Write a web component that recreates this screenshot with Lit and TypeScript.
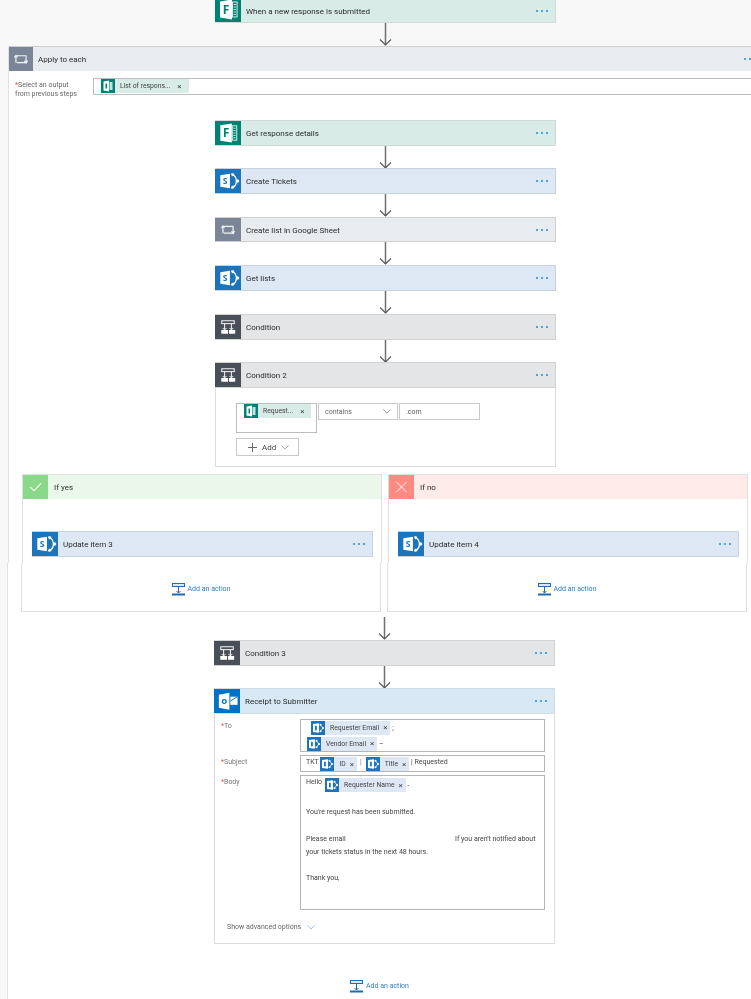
import { LitElement, html, css, svg } from "lit";
import { customElement } from "lit/decorators.js";

const formsIcon = svg`<svg viewBox="0 0 26 25" width="100%" height="100%">
  <path d="M5 4.500 17 2.500V22.500L5 20.500Z" fill="#fff"/>
  <text x="11" y="17" font-size="12" font-weight="700" text-anchor="middle" fill="#008272" font-family="'Open Sans',sans-serif">F</text>
  <rect x="17.500" y="5" width="4.600" height="15" fill="none" stroke="#d6efe9" stroke-width="1"/>
  <path d="M18.500 7.500h2.500M18.500 10h2.500M18.500 12.500h2.500M18.500 15h2.500M18.500 17.500h2.500" stroke="#bfe4dc" stroke-width="1"/>
</svg>`;

const spIcon = svg`<svg viewBox="0 0 26 25" width="100%" height="100%">
  <path d="M5 6.500 15 5V20L5 18.500Z" fill="#fff"/>
  <text x="10" y="16" font-size="9" font-weight="700" text-anchor="middle" fill="#1b74bc" font-family="'Open Sans',sans-serif">S</text>
  <path d="M16.500 5A8 8 0 0 1 16.500 20" stroke="#fff" stroke-width="1.300" fill="none"/>
  <circle cx="18" cy="6" r="1.500" fill="#fff"/><circle cx="23" cy="12.500" r="1.700" fill="#fff"/><circle cx="18" cy="19" r="1.500" fill="#fff"/>
</svg>`;

const outlookIcon = svg`<svg viewBox="0 0 26 25" width="100%" height="100%">
  <path d="M4.500 6 15.500 4V21.500L4.500 19.500Z" fill="#fff"/>
  <text x="10" y="16" font-size="10" font-weight="700" text-anchor="middle" fill="#0072c6" font-family="'Open Sans',sans-serif">o</text>
  <path d="M16.500 8H24V16.500H16.500Z" fill="#fff"/>
  <path d="M16.500 12.500 24 8" stroke="#0072c6" stroke-width="1" fill="none"/>
</svg>`;

const loopIcon = svg`<svg viewBox="0 0 26 25" width="100%" height="100%" fill="none" stroke="#f2f4f6" stroke-width="1.300">
  <path d="M7.500 16.500V9H18"/><path d="M18.500 8.500V16.500H8.500"/>
  <path d="M5.800 10.800 7.500 8.800 9.200 10.800"/><path d="M16.800 14.200 18.500 16.700 20.200 14.200"/>
</svg>`;

const condIcon = svg`<svg viewBox="0 0 26 25" width="100%" height="100%" fill="none" stroke="#fff" stroke-width="1">
  <rect x="6.500" y="6" width="13" height="3"/>
  <path d="M9.500 9V15M16.500 9V15"/>
  <path d="M6 15.500h7v4H6zM14 15.500h6.500v4H14z" fill="#fff" stroke="none"/>
  <path d="M7.500 13.500 9.500 15.500 11.500 13.500M14.500 13.500 16.500 15.500 18.500 13.500" stroke-width="1"/>
</svg>`;

const checkIcon = svg`<svg viewBox="0 0 26 25" width="100%" height="100%" fill="none" stroke="#fff" stroke-width="1.100"><path d="M7.500 12.500 11.500 16.500 19 8.500"/></svg>`;
const crossIcon = svg`<svg viewBox="0 0 26 25" width="100%" height="100%" fill="none" stroke="#fff" stroke-width="1"><path d="M7.500 7 18.500 18M18.500 7 7.500 18"/></svg>`;

const addIcon = svg`<svg viewBox="0 0 13 13" width="13" height="13" fill="none" stroke="#1c6cb8" stroke-width="1">
  <rect x=".5" y=".5" width="12" height="3" fill="#dbe8f5"/>
  <path d="M6.500 3.500V10M4.500 8 6.500 10 8.500 8"/>
  <path d="M0 11.500H13" stroke-width="2"/>
</svg>`;

const chev = svg`<svg viewBox="0 0 10 6" width="8" height="5" fill="none" stroke="currentColor" stroke-width=".9"><path d="M.5 .5 5 5 9.500 .5"/></svg>`;

const arrow = svg`<svg viewBox="0 0 13 23" width="13" height="23" fill="none" stroke="#6f6f6f"><path d="M6.500 0V22" stroke-width="1.500"/><path d="M1 16.500 6.500 22 12 16.500" stroke-width="1.100" stroke="#555"/></svg>`;

const miniForms = svg`<svg viewBox="0 0 14 14" width="14" height="14"><path d="M2.500 2.500 8 1.500V12.500L2.500 11.500Z" fill="#fff"/><rect x="8.500" y="3" width="3" height="8" fill="#bfe4dc"/><rect x="4.500" y="4.500" width="1.500" height="5" fill="#008272"/></svg>`;
const miniOut = svg`<svg viewBox="0 0 14 14" width="14" height="14"><path d="M2 3 8 2.200V11.800L2 11Z" fill="#fff"/><rect x="4" y="4.800" width="1.800" height="4.500" fill="#1b74bc"/><circle cx="9.500" cy="3.800" r="1" fill="#fff"/><circle cx="12" cy="7" r="1.100" fill="#fff"/><circle cx="9.500" cy="10.200" r="1" fill="#fff"/><path d="M9.500 3.800 12 7 9.500 10.200" stroke="#fff" stroke-width=".8" fill="none"/></svg>`;

@customElement("app-root")
export class AppRoot extends LitElement {
  static styles = css`
    :host {
      display: block;
      width: 751px;
      height: 999px;
      overflow: hidden;
      background: #f8f8f8;
      font-family: Roboto, "Open Sans", sans-serif;
      font-size: 8px;
      color: #333;
      filter: blur(0.35px);
    }
    .top { height: 46px; padding-left: 215px; display: flex; flex-direction: column; }
    .top .arrow { width: 341px; height: 23px; }
    .card {
      width: 341px;
      height: 26px;
      box-sizing: border-box;
      display: flex;
      align-items: stretch;
      border: 1px solid;
      border-left: 0;
      flex: none;
    }
    .card.short { height: 25px; }
    .trigger { height: 23px; border-top: 0; overflow: hidden; align-items: flex-end; }
    .trigger .ico { height: 25px; }
    .trigger .title { align-self: center; }
    .trigger .dots { align-self: center; }
    .ico { width: 26px; flex: none; height: 100%; display: block; }
    .title { flex: 1; align-self: center; padding: 1px 0 0 5px; font-size: 8px; color: #2b2b2b; white-space: nowrap; }
    .dots { display: flex; gap: 3px; align-self: center; margin-right: 7px; }
    .dots i { display: block; width: 2px; height: 2px; background: #4da3e6; }
    .forms { background: #d9ebe7; border-color: #d0dbd8; }
    .forms .ico { background: #008272; }
    .sp { background: #dde8f4; border-color: #c8d2dd; }
    .sp .ico { background: #1b74bc; }
    .loop { background: #e9ecef; border-color: #cfcfcf; }
    .loop .ico { background: #7a8698; }
    .cond { background: #e4e5e7; border-color: #d2d2d2; }
    .cond .ico { background: #484f58; }
    .out { background: #d8e9f5; border-color: #d0dde6; }
    .out .ico { background: #0072c6; }

    .sec-a { margin-left: 8px; border-left: 1px solid #e2e2e2; background: #fff; height: 517px; box-sizing: border-box; }
    .sec-b { margin-left: 7px; border-left: 1px solid #e2e2e2; background: #fff; height: 436px; box-sizing: border-box; }
    .apply { width: 100%; height: 25px; border: 0; border-top: 1px solid #d0d0d0; }
    .apply .ico { width: 24px; }
    .apply .dots { margin-right: -5px; }
    .apply-row { display: flex; height: 49px; box-sizing: border-box; padding-top: 7px; }
    .apply-label { width: 84px; flex: none; box-sizing: border-box; padding: 3px 0 0 6px; font-size: 7px; line-height: 9px; color: #666; }
    .req { color: #d9534f; }
    .apply-input { flex: 1; height: 17px; box-sizing: border-box; border: 1px solid #bdbdbd; border-right: 0; padding: 0 0 0 7px; }
    .stack { margin-left: 206px; width: 341px; display: flex; flex-direction: column; align-items: stretch; }
    .arrow { display: flex; justify-content: center; height: 22px; overflow: hidden; flex: none; }
    .arrow.long { height: 23px; }

    .chip { display: inline-flex; align-items: center; height: 14px; background: #d9ebe7; vertical-align: top; white-space: nowrap; font-size: 6.800px; color: #444; flex: none; }
    .chip.b { background: #dde8f4; }
    .chip .ci { width: 14px; height: 14px; background: #008272; flex: none; display: block; }
    .chip.b .ci { background: #1b74bc; }
    .chip .ct { padding-left: 5px; }
    .chip .cx { padding: 0 7px; font-size: 8px; color: #444; }
    .chip.b .cx { padding: 0 3px 0 4px; }

    .cbody { height: 79px; box-sizing: border-box; border: 1px solid #dcdcdc; border-top: 0; padding: 15px 0 0 20px; background: #fff; }
    .crow { display: flex; gap: 1px; align-items: flex-start; }
    .lhs { width: 81px; height: 30px; box-sizing: border-box; border: 1px solid #bdbdbd; padding-left: 7px; }
    .sel, .val { width: 80px; height: 17px; box-sizing: border-box; border: 1px solid #c8c8c8; display: flex; align-items: center; padding: 0 6px; font-size: 7px; color: #555; }
    .sel span { flex: 1; }
    .sel { color: #666; }
    .val { width: 81px; }
    .addbtn { margin-top: 5px; width: 63px; height: 18px; box-sizing: border-box; border: 1px solid #c8c8c8; display: flex; align-items: center; gap: 5px; padding-left: 11px; font-size: 8px; color: #444; }
    .plus { width: 9px; height: 9px; position: relative; flex: none; }
    .plus::before { content: ""; position: absolute; left: 4px; top: 0; width: 1px; height: 9px; background: #666; }
    .plus::after { content: ""; position: absolute; top: 4px; left: 0; width: 9px; height: 1px; background: #666; }
    .addbtn .chv { color: #888; display: flex; }

    .branches { display: flex; gap: 6px; padding-left: 13px; }
    .branch-up { margin-top: 7px; width: 360px; height: 89px; box-sizing: border-box; border: 1px solid #e0e0e0; border-bottom: 0; background: #fff; }
    .bh { height: 24px; display: flex; align-items: stretch; }
    .bh .ico { width: 25px; }
    .bh .title { padding-left: 6px; }
    .yes { background: #ecf7ec; }
    .yes .ico { background: #8ad98a; }
    .no { background: #ffeaea; }
    .no .ico { background: #ff8a82; }
    .branch-up .card { margin: 32px 0 0 9px; }
    .branch-low { width: 360px; height: 49px; box-sizing: border-box; border: 1px solid #e0e0e0; border-top: 0; display: flex; justify-content: center; padding-top: 20px; background: #fff; }
    .add { display: flex; align-items: flex-start; gap: 3px; font-size: 7px; color: #2f7cc4; line-height: 13px; height: 13px; }
    .sec-b .after { margin-top: 5px; }

    .rbody { height: 230px; box-sizing: border-box; border: 1px solid #dcdcdc; border-top: 0; padding-top: 5px; background: #fff; }
    .grid { display: grid; grid-template-columns: 85px 245px; row-gap: 3px; }
    .lab { padding: 3px 0 0 6px; font-size: 7px; color: #777; }
    .box { box-sizing: border-box; border: 1px solid #b5b5b5; font-size: 7px; color: #444; }
    .to { height: 33px; display: flex; flex-direction: column; }
    .line { display: flex; align-items: center; height: 15px; }
    .l1 { padding-left: 10px; }
    .l2 { padding-left: 6px; margin-top: 1px; }
    .subj { height: 17px; display: flex; align-items: flex-start; padding-left: 5px; line-height: 13px; }
    .subj .chip { margin-top: 1px; }
    .sep { padding: 0 4px 0 3px; color: #777; }
    .bodybox { height: 135px; padding: 2px 0 0 5px; line-height: 13.300px; }
    .hello { display: flex; align-items: flex-start; height: 14px; margin-bottom: 14px; line-height: 9px; }
    .hello .chip { margin-left: 3px; }
    .hello .after-chip { padding-top: 4px; }
    .gap { height: 13.300px; }
    .pl { display: flex; white-space: nowrap; }
    .pl .l { width: 149px; flex: none; }
    .adv { margin: 11px 0 0 12px; display: flex; align-items: center; gap: 6px; font-size: 7px; color: #666; height: 12px; }
    .adv span { display: flex; color: #7aa7d8; }
    .final { display: flex; justify-content: center; margin-top: 36px; }
  `;

  private dots() {
    return html`<div class="dots"><i></i><i></i><i></i></div>`;
  }

  private card(kind: string, title: string, icon: unknown, extra = "") {
    return html`<div class="card ${kind} ${extra}"><span class="ico">${icon}</span><span class="title">${title}</span>${this.dots()}</div>`;
  }

  private chip(text: string, blue = true) {
    return html`<span class="chip ${blue ? "b" : ""}"><span class="ci">${blue ? miniOut : miniForms}</span><span class="ct">${text}</span><span class="cx">×</span></span>`;
  }

  private arrow(long = false) {
    return html`<div class="arrow ${long ? "long" : ""}">${arrow}</div>`;
  }

  private addAction() {
    return html`<div class="add">${addIcon}<span>Add an action</span></div>`;
  }

  render() {
    return html`
      <div class="top">
        ${this.card("forms", "When a new response is submitted", formsIcon, "trigger")}
        <div class="arrow">${arrow}</div>
      </div>
      <section class="sec-a">
        ${this.card("loop", "Apply to each", loopIcon, "apply")}
        <div class="apply-row">
          <div class="apply-label"><span class="req">*</span>Select an output<br />from previous steps</div>
          <div class="apply-input">${this.chip("List of respons...", false)}</div>
        </div>
        <div class="stack">
          ${this.card("forms", "Get response details", formsIcon)}
          ${this.arrow()}
          ${this.card("sp", "Create Tickets", spIcon)}
          ${this.arrow(true)}
          ${this.card("loop", "Create list in Google Sheet", loopIcon, "short")}
          ${this.arrow(true)}
          ${this.card("sp", "Get lists", spIcon)}
          ${this.arrow(true)}
          ${this.card("cond", "Condition", condIcon)}
          ${this.arrow()}
          ${this.card("cond", "Condition 2", condIcon)}
          <div class="cbody">
            <div class="crow">
              <div class="lhs">${this.chip("Request...", false)}</div>
              <div class="sel"><span>contains</span>${chev}</div>
              <div class="val">.com</div>
            </div>
            <div class="addbtn"><i class="plus"></i>Add<span class="chv">${chev}</span></div>
          </div>
        </div>
        <div class="branches">
          <div class="branch-up">
            <div class="bh yes"><span class="ico">${checkIcon}</span><span class="title">If yes</span></div>
            ${this.card("sp", "Update item 3", spIcon)}
          </div>
          <div class="branch-up">
            <div class="bh no"><span class="ico">${crossIcon}</span><span class="title">If no</span></div>
            ${this.card("sp", "Update item 4", spIcon)}
          </div>
        </div>
      </section>
      <section class="sec-b">
        <div class="branches">
          <div class="branch-low">${this.addAction()}</div>
          <div class="branch-low">${this.addAction()}</div>
        </div>
        <div class="stack after">
          ${this.arrow(true)}
          ${this.card("cond", "Condition 3", condIcon)}
          ${this.arrow()}
          ${this.card("out", "Receipt to Submitter", outlookIcon)}
          <div class="rbody">
            <div class="grid">
              <div class="lab"><span class="req">*</span>To</div>
              <div class="box to">
                <div class="line l1">${this.chip("Requester Email")}<span>&nbsp;;</span></div>
                <div class="line l2">${this.chip("Vendor Email")}<span>&nbsp;–</span></div>
              </div>
              <div class="lab"><span class="req">*</span>Subject</div>
              <div class="box subj">TKT&nbsp;${this.chip("ID")}<span class="sep">|</span>${this.chip("Title")}<span>&nbsp;| Requested</span></div>
              <div class="lab"><span class="req">*</span>Body</div>
              <div class="box bodybox">
                <div class="hello">Hello${this.chip("Requester Name")}<span class="after-chip">&nbsp;-</span></div>
                <div>You're request has been submitted.</div>
                <div class="gap"></div>
                <div class="pl"><span class="l">Please email</span><span>If you aren't notified about</span></div>
                <div>your tickets status in the next 48 hours.</div>
                <div class="gap"></div>
                <div>Thank you,</div>
              </div>
            </div>
            <div class="adv">Show advanced options <span>${chev}</span></div>
          </div>
        </div>
        <div class="final">${this.addAction()}</div>
      </section>
    `;
  }
}
